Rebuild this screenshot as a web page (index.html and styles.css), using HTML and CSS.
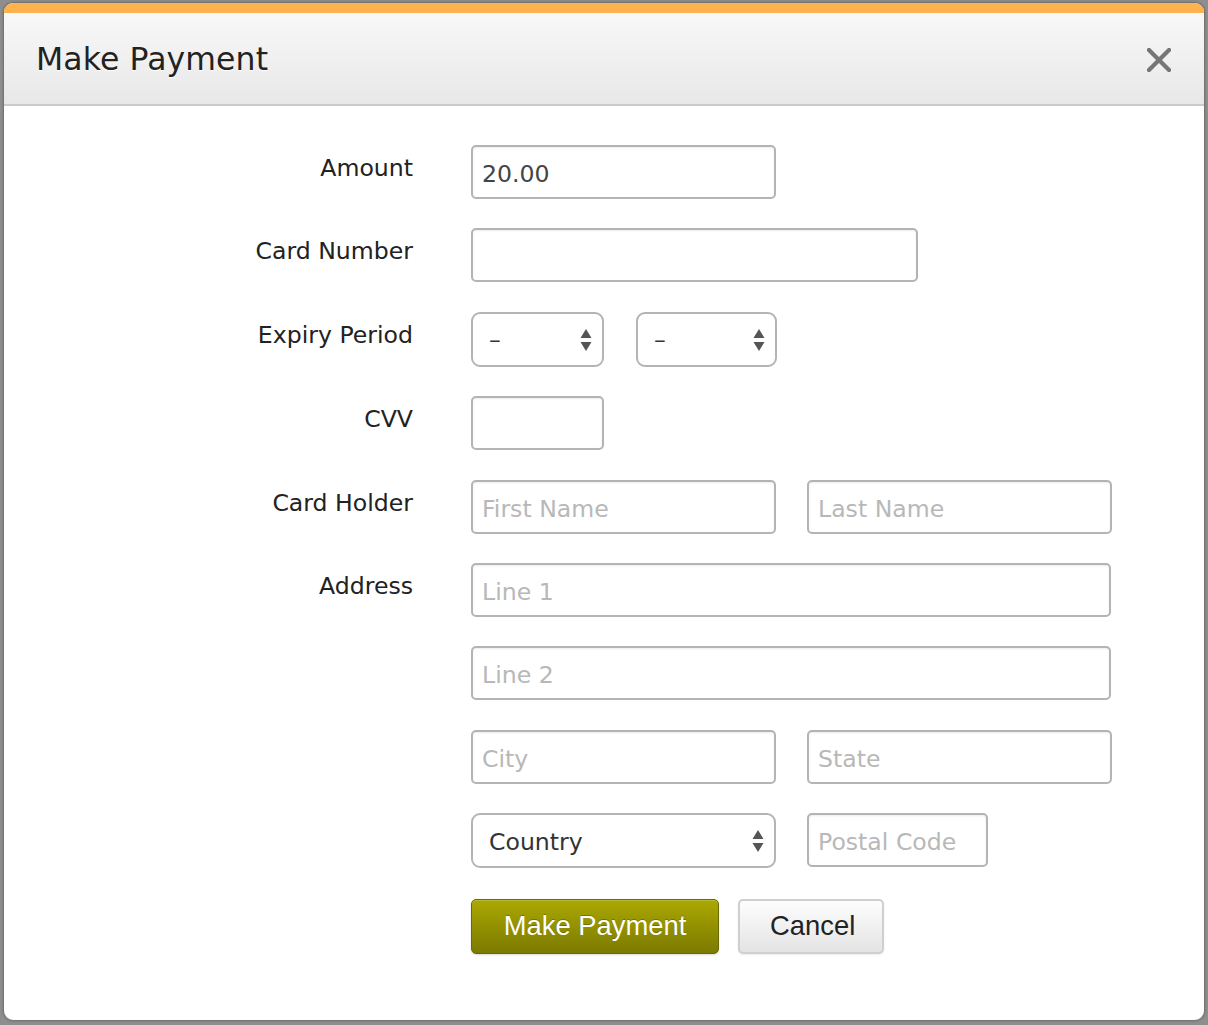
FILE: index.html
```html
<!DOCTYPE html>
<html>
<head>
<meta charset="utf-8">
<link rel="stylesheet" href="styles.css">
</head>
<body>
<div class="modal">
  <div class="modal-header">
    <h1 class="title">Make Payment</h1>
    <svg class="close" width="24" height="24" viewBox="0 0 24 24" aria-label="Close"><path d="M2 2 L22 22 M22 2 L2 22" stroke="#767676" stroke-width="4.2" stroke-linecap="square"/></svg>
  </div>
  <form class="form">
    <label class="label">Amount</label>
    <div class="fields"><input class="input w304" type="text" value="20.00"></div>

    <label class="label">Card Number</label>
    <div class="fields"><input class="input w446" type="text"></div>

    <label class="label">Expiry Period</label>
    <div class="fields fields-wide">
      <div class="select-wrap w132">
        <select class="select"><option>–</option></select>
        <svg class="arrows" width="12" height="24" viewBox="0 0 12 24"><path d="M6 1 L11.5 10 L0.5 10 Z M6 23 L11.5 14 L0.5 14 Z" fill="#555"/></svg>
      </div>
      <div class="select-wrap w140">
        <select class="select"><option>–</option></select>
        <svg class="arrows" width="12" height="24" viewBox="0 0 12 24"><path d="M6 1 L11.5 10 L0.5 10 Z M6 23 L11.5 14 L0.5 14 Z" fill="#555"/></svg>
      </div>
    </div>

    <label class="label">CVV</label>
    <div class="fields"><input class="input w132" type="text"></div>

    <label class="label">Card Holder</label>
    <div class="fields">
      <input class="input w304" type="text" placeholder="First Name">
      <input class="input w304" type="text" placeholder="Last Name">
    </div>

    <label class="label">Address</label>
    <div class="fields"><input class="input w639" type="text" placeholder="Line 1"></div>

    <span class="label"></span>
    <div class="fields"><input class="input w639" type="text" placeholder="Line 2"></div>

    <span class="label"></span>
    <div class="fields">
      <input class="input w304" type="text" placeholder="City">
      <input class="input w304" type="text" placeholder="State">
    </div>

    <span class="label"></span>
    <div class="fields">
      <div class="select-wrap w304 tall">
        <select class="select country"><option>Country</option></select>
        <svg class="arrows" width="12" height="24" viewBox="0 0 12 24"><path d="M6 1 L11.5 10 L0.5 10 Z M6 23 L11.5 14 L0.5 14 Z" fill="#555"/></svg>
      </div>
      <input class="input w180" type="text" placeholder="Postal Code">
    </div>

    <span class="label"></span>
    <div class="fields buttons">
      <button type="button" class="btn btn-primary">Make Payment</button>
      <button type="button" class="btn btn-default">Cancel</button>
    </div>
  </form>
</div>
</body>
</html>
```

FILE: styles.css
```css
html, body {
  margin: 0;
  padding: 0;
}
body {
  width: 1208px;
  height: 1025px;
  background: #8e8e8e;
  overflow: hidden;
  font-family: "DejaVu Sans", "Liberation Sans", sans-serif;
}
.modal {
  margin: 3px 0 0 4px;
  width: 1200px;
  height: 1017px;
  background: #fff;
  border-radius: 9px;
  overflow: hidden;
  box-sizing: border-box;
  box-shadow: 0 0 3px rgba(0,0,0,0.5);
}
.modal-header {
  height: 91px;
  border-top: 10px solid #fdb24e;
  background: linear-gradient(#f8f8f8, #e8e8e8);
  border-bottom: 2px solid #cacaca;
  display: flex;
  align-items: center;
  justify-content: space-between;
  padding: 0 33px 0 32px;
  box-sizing: content-box;
}
.title {
  margin: 0;
  font-weight: normal;
  font-size: 31.5px;
  color: #222;
  text-shadow: 0 1px 0 #fff;
  letter-spacing: 0.1px;
}
.close {
  display: block;
  margin-top: 2px;
}
.form {
  display: grid;
  grid-template-columns: 409px 1fr;
  column-gap: 58px;
  row-gap: 29.4px;
  padding-top: 39px;
}
.label {
  text-align: right;
  font-size: 23.6px;
  color: #222;
  padding-top: 9px;
  line-height: 28px;
}
.fields {
  display: flex;
  gap: 31px;
  align-items: flex-start;
}
.fields-wide {
  gap: 32px;
}
.input {
  height: 54px;
  box-sizing: border-box;
  border: 2px solid #b4b4b4;
  border-radius: 5px;
  padding: 4px 9px 0;
  font-family: "DejaVu Sans", sans-serif;
  font-size: 23.6px;
  color: #444;
  background: #fff;
  box-shadow: inset 0 1px 2px rgba(0,0,0,0.08);
  outline: none;
}
.input::placeholder {
  color: #b8b8b8;
}
.w132 { width: 133px; }
.w140 { width: 141px; }
.w180 { width: 181px; }
.w304 { width: 305px; }
.w446 { width: 447px; }
.w639 { width: 640px; }
.select-wrap {
  position: relative;
  height: 55px;
}
.select {
  appearance: none;
  -webkit-appearance: none;
  width: 100%;
  height: 100%;
  box-sizing: border-box;
  border: 2px solid #b4b4b4;
  border-radius: 9px;
  background: #fff;
  padding: 2px 0 0 16px;
  font-family: "DejaVu Sans", sans-serif;
  font-size: 23.6px;
  color: #333;
  outline: none;
}
.arrows {
  position: absolute;
  right: 12px;
  top: 16px;
  pointer-events: none;
}
.buttons {
  gap: 19px;
  padding-top: 1px;
}
.btn {
  height: 55px;
  box-sizing: border-box;
  font-family: "Liberation Sans", Arial, sans-serif;
  font-size: 27.4px;
  border-radius: 5px;
  padding: 0 30px;
  cursor: pointer;
}
.btn-primary {
  width: 248px;
  color: #fff;
  background: linear-gradient(#aba800, #7b7a00);
  border: 1px solid #6b6a00;
  text-shadow: 0 -1px 0 rgba(0,0,0,0.25);
  box-shadow: inset 0 1px 0 rgba(255,255,255,0.2), 0 1px 2px rgba(0,0,0,0.15);
}
.btn-default {
  width: 146px;
  color: #222;
  background: linear-gradient(#fdfdfd, #e4e4e4);
  border: 2px solid #cfcfcf;
  box-shadow: 0 1px 2px rgba(0,0,0,0.08);
}
```
